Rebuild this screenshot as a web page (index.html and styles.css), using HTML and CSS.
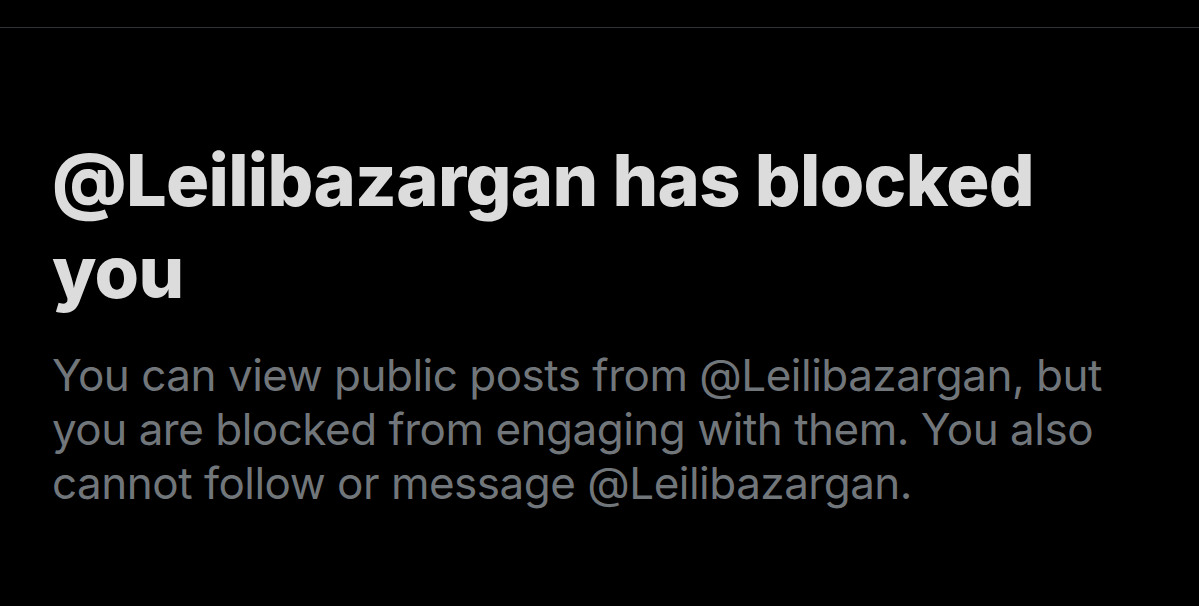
FILE: index.html
```html
<!DOCTYPE html>
<html>
<head>
<meta charset="utf-8">
<link rel="stylesheet" href="styles.css">
</head>
<body>
<div class="page">
  <div class="topbar"></div>
  <section class="blocked">
    <h1 class="title">@Leilibazargan has blocked you</h1>
    <p class="desc">You can view public posts from @Leilibazargan, but you are blocked from engaging with them. You also cannot follow or message @Leilibazargan.</p>
  </section>
</div>
</body>
</html>
```
FILE: styles.css
```css
html, body {
  margin: 0;
  padding: 0;
  background: #000;
}
.page {
  width: 1199px;
  height: 606px;
  background: #000;
  overflow: hidden;
  font-family: Inter, "Liberation Sans", Arial, sans-serif;
}
.topbar {
  height: 27px;
  border-bottom: 1px solid #2f3336;
}
.blocked {
  padding: 106px 0 0 52px;
  width: 1110px;
}
.title {
  margin: 0;
  font-size: 72px;
  line-height: 92px;
  font-weight: 800;
  letter-spacing: -0.7px;
  color: #dcdcdc;
}
.desc {
  margin: 30px 0 0 0;
  font-size: 44px;
  line-height: 54px;
  font-weight: 400;
  letter-spacing: -0.5px;
  color: #71767b;
}
```
